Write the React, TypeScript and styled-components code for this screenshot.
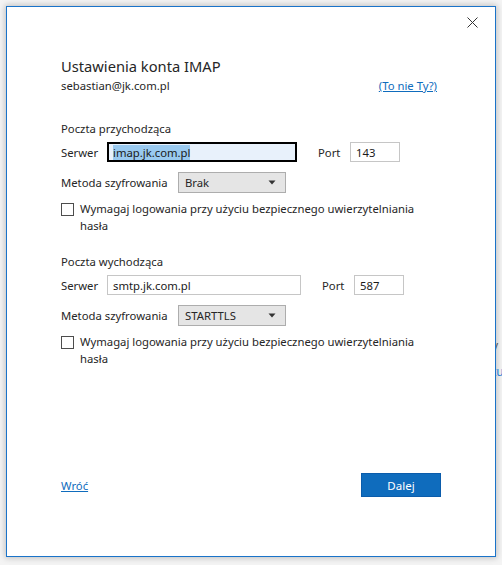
import React from "react";
import styled, { createGlobalStyle } from "styled-components";

const GlobalStyle = createGlobalStyle`
  html, body {
    margin: 0;
    padding: 0;
    background: #f4f4f4;
  }
  body {
    font-family: "Noto Sans", "Open Sans", sans-serif;
    color: #262626;
  }
`;

const Page = styled.div`
  display: flex;
  width: 502px;
  height: 565px;
  padding: 6px 0 0 6px;
  box-sizing: border-box;
  overflow: hidden;
`;

const Dialog = styled.div`
  width: 490px;
  height: 551px;
  flex-shrink: 0;
  box-sizing: border-box;
  border: 1px solid #1a73c9;
  background: #ffffff;
  box-shadow: 0 0 6px 1px rgba(0, 0, 0, 0.22);
  display: flex;
  flex-direction: column;
`;

// window behind the dialog, only its edge is visible
const Peek = styled.div`
  width: 6px;
  overflow: hidden;
  display: flex;
  flex-direction: column;
  padding-top: 327px;
  font-size: 12px;
  line-height: 26px;
  white-space: nowrap;
`;

const PeekText = styled.span<{ $link?: boolean }>`
  color: ${(p) => (p.$link ? "#1f7ed6" : "#555")};
  margin-left: -4px;
`;

const TitleBar = styled.div`
  display: flex;
  justify-content: flex-end;
  padding: 3px 11px 0 0;
  height: 45px;
`;

const CloseButton = styled.button`
  width: 24px;
  height: 24px;
  border: none;
  background: transparent;
  padding: 0;
  display: flex;
  align-items: center;
  justify-content: center;
  cursor: pointer;
`;

const Content = styled.div`
  flex: 1;
  display: flex;
  flex-direction: column;
  padding: 0 58px 59px 54px;
  font-size: 11.3px;
`;

const Title = styled.h1`
  margin: 0;
  font-size: 14.7px;
  font-weight: 400;
  line-height: 22px;
  color: #262626;
`;

const AccountRow = styled.div`
  display: flex;
  justify-content: space-between;
  align-items: center;
  line-height: 16px;
  margin-top: 1px;
`;

const Link = styled.a`
  color: #0f6cbd;
  text-decoration: underline;
  cursor: pointer;
`;

const Section = styled.section<{ $first?: boolean }>`
  display: flex;
  flex-direction: column;
  margin-top: ${(p) => (p.$first ? "27px" : "20px")};
`;

const SectionTitle = styled.div`
  line-height: 16px;
  margin-bottom: 5px;
`;

const Row = styled.div`
  display: flex;
  align-items: center;
  height: 20px;
`;

const Label = styled.span<{ $width: number; $gap?: number }>`
  width: ${(p) => p.$width}px;
  margin-left: ${(p) => p.$gap ?? 0}px;
  flex-shrink: 0;
`;

const TextBox = styled.div<{ $width: number; $focused?: boolean }>`
  width: ${(p) => p.$width}px;
  height: 20px;
  box-sizing: border-box;
  border: ${(p) => (p.$focused ? "2px solid #000" : "1px solid #c6c6c6")};
  background: ${(p) => (p.$focused ? "#e8f1fb" : "#fff")};
  padding-left: ${(p) => (p.$focused ? "4px" : "5px")};
  display: flex;
  align-items: center;
  color: #1a1a1a;
`;

const Selected = styled.span`
  background: #99c9ef;
  line-height: 15px;
`;

const Select = styled.div`
  width: 108px;
  height: 21px;
  box-sizing: border-box;
  border: 1px solid #adadad;
  background: #e5e5e5;
  display: flex;
  align-items: center;
  justify-content: space-between;
  padding: 0 9px 0 6px;
`;

const SelectRow = styled(Row)`
  height: 21px;
  margin-top: 10px;
`;

const CheckRow = styled.label`
  display: flex;
  align-items: flex-start;
  margin-top: 7px;
  line-height: 17px;
`;

const CheckBox = styled.span`
  width: 13px;
  height: 13px;
  box-sizing: border-box;
  border: 1px solid #4d4d4d;
  background: #fff;
  flex-shrink: 0;
  margin: 3px 6px 0 0;
`;

const Spacer = styled.div`
  flex: 1;
`;

const Footer = styled.div`
  display: flex;
  justify-content: space-between;
  align-items: center;
  margin-right: -4px;
`;

const PrimaryButton = styled.button`
  width: 80px;
  height: 24px;
  border: 1px solid #0b5cab;
  background: #0f6cbd;
  color: #fff;
  font-family: inherit;
  font-size: 11.5px;
  padding: 0;
  cursor: pointer;
`;

const Arrow = () => (
  <svg width="8" height="5" viewBox="0 0 8 5">
    <path d="M0.5 0.5 H7.5 L4 4.5 Z" fill="#333" />
  </svg>
);

const CloseIcon = () => (
  <svg width="11" height="11" viewBox="0 0 11 11">
    <path d="M0.5 0.5 L10.5 10.5 M10.5 0.5 L0.5 10.5" stroke="#333" strokeWidth="1" />
  </svg>
);

interface ServerSectionProps {
  title: string;
  server: string;
  port: string;
  encryption: string;
  first?: boolean;
  serverWidth: number;
  focused?: boolean;
}

const ServerSection: React.FC<ServerSectionProps> = ({
  title,
  server,
  port,
  encryption,
  first,
  serverWidth,
  focused,
}) => (
  <Section $first={first}>
    <SectionTitle>{title}</SectionTitle>
    <Row>
      <Label $width={46}>Serwer</Label>
      <TextBox $width={serverWidth} $focused={focused}>
        {focused ? <Selected>{server}</Selected> : server}
      </TextBox>
      <Label $width={32} $gap={21}>
        Port
      </Label>
      <TextBox $width={50}>{port}</TextBox>
    </Row>
    <SelectRow>
      <Label $width={117}>Metoda szyfrowania</Label>
      <Select>
        <span>{encryption}</span>
        <Arrow />
      </Select>
    </SelectRow>
    <CheckRow>
      <CheckBox />
      <span>
        Wymagaj logowania przy użyciu bezpiecznego uwierzytelniania
        <br />
        hasła
      </span>
    </CheckRow>
  </Section>
);

export default function App() {
  return (
    <>
      <GlobalStyle />
      <Page>
        <Dialog>
          <TitleBar>
            <CloseButton aria-label="Zamknij">
              <CloseIcon />
            </CloseButton>
          </TitleBar>
          <Content>
            <Title>Ustawienia konta IMAP</Title>
            <AccountRow>
              <span>sebastian@jk.com.pl</span>
              <Link>(To nie Ty?)</Link>
            </AccountRow>
            <ServerSection
              first
              title="Poczta przychodząca"
              server="imap.jk.com.pl"
              port="143"
              encryption="Brak"
              serverWidth={190}
              focused
            />
            <ServerSection
              title="Poczta wychodząca"
              server="smtp.jk.com.pl"
              port="587"
              encryption="STARTTLS"
              serverWidth={194}
            />
            <Spacer />
            <Footer>
              <Link>Wróć</Link>
              <PrimaryButton>Dalej</PrimaryButton>
            </Footer>
          </Content>
        </Dialog>
        <Peek>
          <PeekText>y</PeekText>
          <PeekText $link>tu</PeekText>
        </Peek>
      </Page>
    </>
  );
}
